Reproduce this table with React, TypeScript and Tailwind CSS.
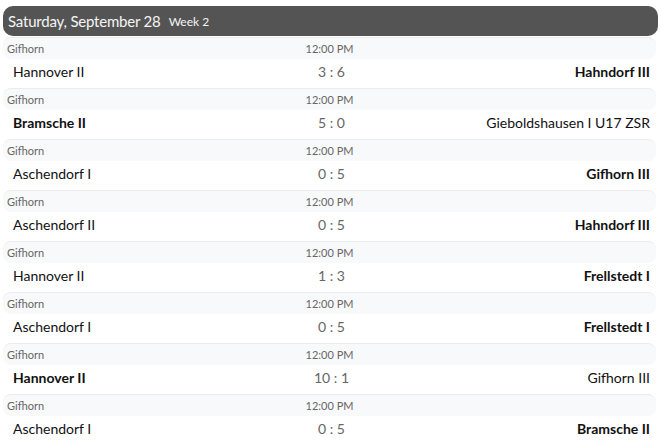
const games = [
  { home: "Hannover II", away: "Hahndorf III", h: 3, a: 6 },
  { home: "Bramsche II", away: "Gieboldshausen I U17 ZSR", h: 5, a: 0 },
  { home: "Aschendorf I", away: "Gifhorn III", h: 0, a: 5 },
  { home: "Aschendorf II", away: "Hahndorf III", h: 0, a: 5 },
  { home: "Hannover II", away: "Frellstedt I", h: 1, a: 3 },
  { home: "Aschendorf I", away: "Frellstedt I", h: 0, a: 5 },
  { home: "Hannover II", away: "Gifhorn III", h: 10, a: 1 },
  { home: "Aschendorf I", away: "Bramsche II", h: 0, a: 5 },
];

export default function App() {
  return (
    <div className="w-[661px] h-[444px] overflow-hidden bg-white px-[3px] pt-[6px] font-['Lato',sans-serif]">
      <div className="flex h-[30px] items-center gap-[8px] rounded-[10px] bg-[#545454] px-[5px] text-[#f4f4f4]">
        <span className="text-[15px] tracking-[-0.2px]">Saturday, September 28</span>
        <span className="text-[12px] pt-[1px]">Week 2</span>
      </div>
      <div className="mt-[1px] w-[653px]">
        {games.map((g, i) => (
          <div key={i}>
            <div className="grid h-[22px] grid-cols-3 items-center rounded-[8px] border-t border-[#ececec] bg-[#f8f9fa] px-[4px] pt-[1px] text-[11px] text-[#666]">
              <span>Gifhorn</span>
              <span className="text-center">12:00 PM</span>
              <span />
            </div>
            <div className="grid h-[29px] grid-cols-[1fr_auto_1fr] items-center pl-[10px] pr-[6px] pb-[4px] text-[14px] text-[#111]">
              <span className={g.h > g.a ? "font-bold" : ""}>{g.home}</span>
              <span className="text-center text-[#666]">
                {g.h} : {g.a}
              </span>
              <span className={"text-right " + (g.a > g.h ? "font-bold" : "")}>{g.away}</span>
            </div>
          </div>
        ))}
      </div>
    </div>
  );
}
